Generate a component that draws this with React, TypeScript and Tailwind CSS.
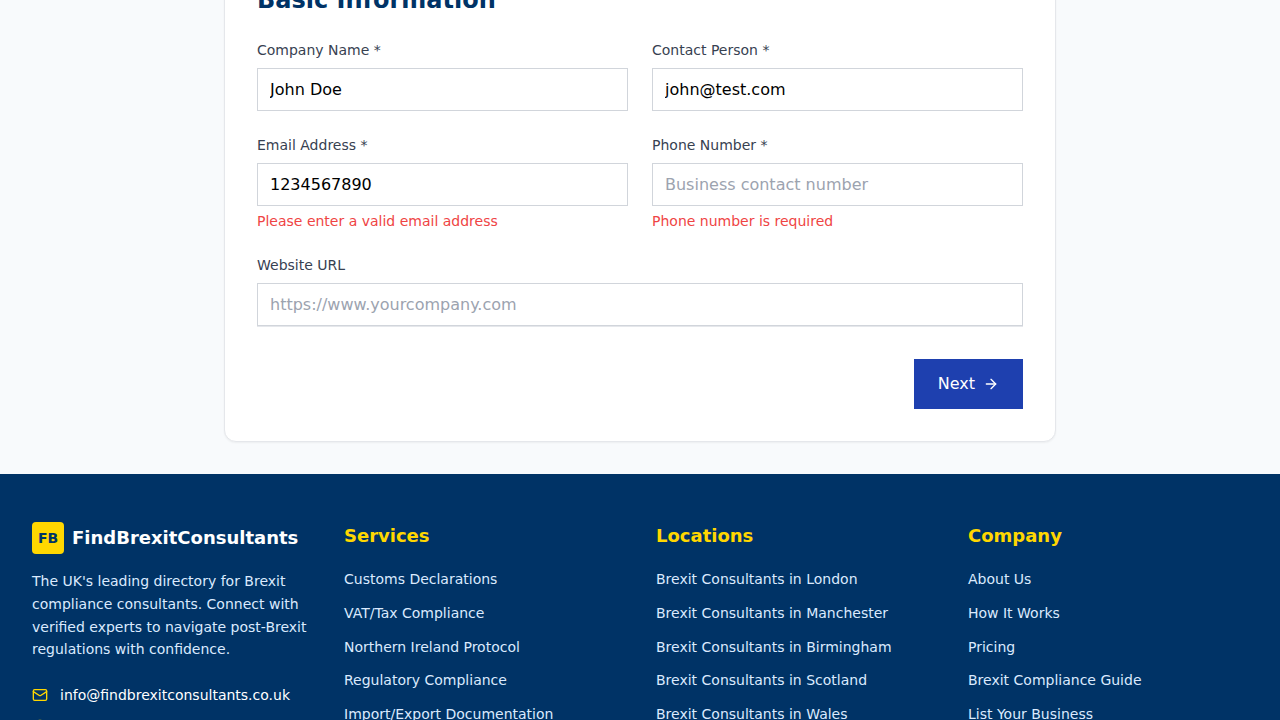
import { useState } from "react";
import { ArrowRight, Mail, MapPin } from "lucide-react";

type FieldProps = {
  id: string;
  label: string;
  type?: string;
  initial?: string;
  placeholder?: string;
  error?: string;
};

function Field({ id, label, type = "text", initial = "", placeholder, error }: FieldProps) {
  const [value, setValue] = useState(initial);
  return (
    <div>
      <label htmlFor={id} className="mb-2 block text-sm text-[#374151]">
        {label}
      </label>
      <input
        id={id}
        type={type}
        value={value}
        placeholder={placeholder}
        aria-invalid={error ? true : undefined}
        aria-describedby={error ? `${id}-error` : undefined}
        onChange={(e) => setValue(e.target.value)}
        className="block h-[43px] w-full border border-[#d1d5db] bg-white px-3 text-base text-black outline-none placeholder:text-[#9ca3af] focus:border-[#1e40af]"
      />
      {error && (
        <p id={`${id}-error`} className="mt-[5px] text-sm text-[#ef4444]">
          {error}
        </p>
      )}
    </div>
  );
}

const columns = [
  {
    title: "Services",
    links: [
      "Customs Declarations",
      "VAT/Tax Compliance",
      "Northern Ireland Protocol",
      "Regulatory Compliance",
      "Import/Export Documentation",
    ],
  },
  {
    title: "Locations",
    links: [
      "Brexit Consultants in London",
      "Brexit Consultants in Manchester",
      "Brexit Consultants in Birmingham",
      "Brexit Consultants in Scotland",
      "Brexit Consultants in Wales",
    ],
  },
  {
    title: "Company",
    links: ["About Us", "How It Works", "Pricing", "Brexit Compliance Guide", "List Your Business"],
  },
];

function RegistrationForm() {
  return (
    <form
      noValidate
      onSubmit={(e) => e.preventDefault()}
      className="rounded-xl border border-[#e5e7eb] bg-white p-8 shadow-xs"
    >
      <h2 className="mb-6 text-2xl font-bold text-[#003366]">Basic Information</h2>
      <div className="grid grid-cols-1 gap-6 md:grid-cols-2">
        <Field id="company" label="Company Name *" initial="John Doe" />
        <Field id="contact" label="Contact Person *" initial="john@test.com" />
        <Field
          id="email"
          label="Email Address *"
          initial="1234567890"
          error="Please enter a valid email address"
        />
        <Field
          id="phone"
          label="Phone Number *"
          type="tel"
          placeholder="Business contact number"
          error="Phone number is required"
        />
        <div className="shadow-[0_1px_0_#e5e7eb] md:col-span-2">
          <Field id="website" label="Website URL" type="url" placeholder="https://www.yourcompany.com" />
        </div>
      </div>
      <div className="mt-[33px] flex justify-end">
        <button type="submit" className="flex items-center gap-2 bg-[#1e40af] px-6 py-[13px] text-base text-white">
          Next
          <ArrowRight className="size-4" aria-hidden="true" />
        </button>
      </div>
    </form>
  );
}

function Footer() {
  return (
    <footer className="bg-[#003366] px-8 py-12">
      <div className="mx-auto grid max-w-7xl grid-cols-1 gap-8 md:grid-cols-4">
        <div>
          <div className="mb-4 flex items-center gap-2">
            <div className="flex size-8 shrink-0 items-center justify-center rounded bg-[#ffd700] text-sm font-bold text-[#003366]">
              FB
            </div>
            <span className="text-lg font-bold text-white">FindBrexitConsultants</span>
          </div>
          <p className="mb-6 text-sm leading-relaxed text-blue-100">
            The UK's leading directory for Brexit compliance consultants. Connect with verified experts to navigate
            post-Brexit regulations with confidence.
          </p>
          <div className="flex flex-col gap-3 text-sm text-white">
            <a href="#email" className="flex h-5 items-center gap-3">
              <Mail className="size-4 shrink-0 text-[#ffd700]" aria-hidden="true" />
              info@findbrexitconsultants.co.uk
            </a>
            <div className="flex h-5 items-center gap-3">
              <MapPin className="size-4 shrink-0 text-[#ffd700]" aria-hidden="true" />
            </div>
          </div>
        </div>
        {columns.map((column) => (
          <nav key={column.title} aria-label={column.title}>
            <h3 className="mb-[18px] text-lg font-semibold text-[#ffd700]">{column.title}</h3>
            <ul className="flex flex-col gap-[11px] text-sm leading-relaxed text-blue-100">
              {column.links.map((link) => (
                <li key={link}>
                  <a href="#" className="hover:text-[#ffd700]">
                    {link}
                  </a>
                </li>
              ))}
            </ul>
          </nav>
        ))}
      </div>
    </footer>
  );
}

export default function App() {
  return (
    <div className="h-screen overflow-hidden bg-[#f8fafc] font-['DejaVu_Sans',sans-serif]">
      <div className="-mt-[49px]">
        <main className="mx-auto max-w-4xl px-8 pb-8">
          <RegistrationForm />
        </main>
        <Footer />
      </div>
    </div>
  );
}
